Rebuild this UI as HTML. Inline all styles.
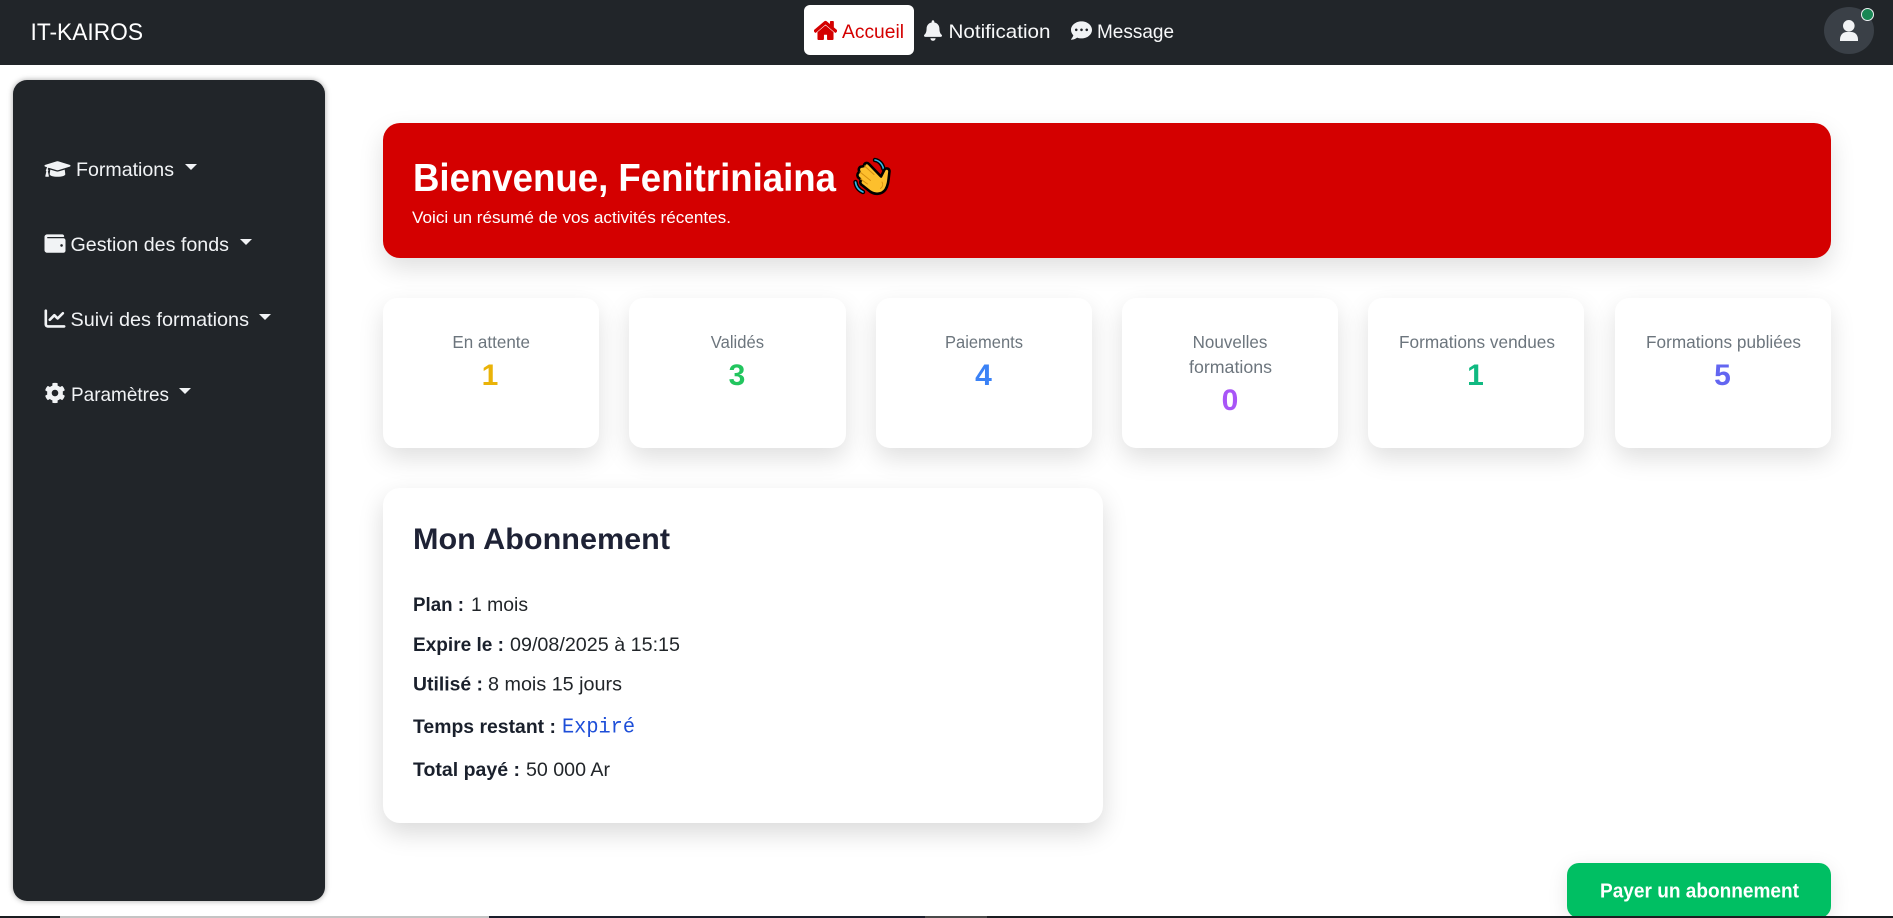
<!DOCTYPE html>
<html lang="fr">
<head>
<meta charset="utf-8">
<title>IT-KAIROS</title>
<style>
html,body{margin:0;padding:0;width:1893px;height:918px;overflow:hidden;background:#fff;font-family:"Liberation Sans",sans-serif}
.b{position:absolute;box-sizing:border-box}
#nav{left:0;top:0;width:1893px;height:65px;background:#212529}
#active{left:804px;top:5px;width:110px;height:50px;background:#fff;border-radius:6px}
#avatar{left:1824px;top:7px;width:50px;height:47px;border-radius:50%;background:#3a4047}
#dot{left:1861px;top:8px;width:13px;height:13px;border-radius:50%;background:#198754;border:1.5px solid #f1f3f5}
#side{left:12.5px;top:80px;width:312.5px;height:821px;background:#212529;border-radius:14px;box-shadow:0 0 6px rgba(0,0,0,.35)}
#banner{left:383px;top:123px;width:1448px;height:135px;background:#d40000;border-radius:17px;box-shadow:0 10px 25px rgba(0,0,0,.13)}
.card{top:298px;width:216.3px;height:150px;background:#fff;border-radius:14px;box-shadow:0 10px 25px rgba(0,0,0,.13)}
#sub{left:383px;top:488px;width:720px;height:335px;background:#fff;border-radius:17px;box-shadow:0 10px 25px rgba(0,0,0,.15)}
#pay{left:1567px;top:863px;width:264px;height:55px;background:#00bf63;border-radius:12px;box-shadow:0 5px 20px rgba(0,0,0,.1)}
#strip{left:0;top:916px;width:1893px;height:2px;background:#1b1d21}
#strip i{position:absolute;top:0;height:2px;display:block}
svg{position:absolute;left:0;top:0}
text{font-family:"Liberation Sans",sans-serif}
.n{font-size:19.5px;fill:#f8f9fa}
.s{font-size:19.5px;fill:#f1f3f5}
.l{font-size:17.5px;fill:#6c757d}
.v{font-size:30px;font-weight:700;text-anchor:middle}
.t{font-size:19.5px;fill:#212529}
.tb{font-size:19.5px;fill:#1a202c;font-weight:700}
</style>
</head>
<body>
<div class="b" id="nav"></div>
<div class="b" id="active"></div>
<div class="b" id="avatar"></div>
<div class="b" id="dot"></div>
<div class="b" id="side"></div>
<div class="b" id="banner"></div>
<div class="b card" style="left:383px"></div>
<div class="b card" style="left:629.3px"></div>
<div class="b card" style="left:875.6px"></div>
<div class="b card" style="left:1121.9px"></div>
<div class="b card" style="left:1368.2px"></div>
<div class="b card" style="left:1614.5px"></div>
<div class="b" id="sub"></div>
<div class="b" id="pay"></div>
<div class="b" id="strip"><i style="left:60px;width:429px;background:#c4c4c4"></i><i style="left:489px;width:436px;background:#1a1e2c"></i><i style="left:925px;width:62px;background:#4a4a4a"></i></div>

<svg width="1893" height="918" viewBox="0 0 1893 918" xmlns="http://www.w3.org/2000/svg">
<!-- navbar -->
<text x="30.5" y="40" font-size="24.5" fill="#fff" textLength="112.5" lengthAdjust="spacingAndGlyphs">IT-KAIROS</text>
<svg x="814" y="20" width="23" height="21" viewBox="0 0 576 512" preserveAspectRatio="none"><path fill="#d40000" stroke="#d40000" stroke-width="18" d="M280.37 148.26L96 300.11V464a16 16 0 0 0 16 16l112.06-.29a16 16 0 0 0 15.92-16V368a16 16 0 0 1 16-16h64a16 16 0 0 1 16 16v95.64a16 16 0 0 0 16 16.05L464 480a16 16 0 0 0 16-16V300L295.67 148.26a12.19 12.19 0 0 0-15.3 0zM571.6 251.47L488 182.56V44.05a12 12 0 0 0-12-12h-56a12 12 0 0 0-12 12v72.61L318.47 43a48 48 0 0 0-61 0L4.34 251.47a12 12 0 0 0-1.6 16.9l25.5 31A12 12 0 0 0 45.15 301l235.22-193.74a12.19 12.19 0 0 1 15.3 0L530.9 301a12 12 0 0 0 16.9-1.6l25.5-31a12 12 0 0 0-1.7-16.93z"/></svg>
<text x="842" y="38" font-size="19.5" fill="#d40000" textLength="62" lengthAdjust="spacingAndGlyphs">Accueil</text>
<svg x="924" y="20" width="18" height="21" viewBox="0 0 448 512"><path fill="#f1f3f5" d="M224 512c35.32 0 63.97-28.65 63.97-64H160.03c0 35.35 28.65 64 63.97 64zm215.39-149.71c-19.32-20.76-55.47-51.99-55.47-154.29 0-77.7-54.48-139.9-127.94-155.16V32c0-17.67-14.32-32-31.98-32s-31.98 14.33-31.98 32v20.84C118.56 68.1 64.08 130.3 64.08 208c0 102.3-36.15 133.53-55.47 154.29-6 6.45-8.66 14.16-8.61 21.71.11 16.4 12.98 32 32.1 32h383.8c19.12 0 32-15.6 32.1-32 .05-7.55-2.61-15.27-8.61-21.71z"/></svg>
<text class="n" x="948.5" y="38" textLength="102" lengthAdjust="spacingAndGlyphs">Notification</text>
<svg x="1070.5" y="20" width="22" height="21" viewBox="0 0 512 512"><path fill="#f1f3f5" d="M256 32C114.6 32 0 125.1 0 240c0 49.6 21.4 95 57 130.7C44.5 421.1 2.7 466 2.2 466.5c-2.2 2.3-2.8 5.7-1.5 8.7S4.8 480 8 480c66.3 0 116-31.8 140.6-51.4 32.7 12.3 69 19.4 107.4 19.4 141.4 0 256-93.1 256-208S397.4 32 256 32zM128 272c-17.7 0-32-14.3-32-32s14.3-32 32-32 32 14.3 32 32-14.3 32-32 32zm128 0c-17.7 0-32-14.3-32-32s14.3-32 32-32 32 14.3 32 32-14.3 32-32 32zm128 0c-17.7 0-32-14.3-32-32s14.3-32 32-32 32 14.3 32 32-14.3 32-32 32z"/></svg>
<text class="n" x="1097" y="38" textLength="77" lengthAdjust="spacingAndGlyphs">Message</text>
<circle cx="1848.8" cy="25.8" r="5.8" fill="#f1f3f5"/>
<path fill="#f1f3f5" d="M1840 41v-1.5c0-5 3.5-7.5 6.5-7.5h5c3 0 6.5 2.500 6.500 7.500V41z"/>

<!-- sidebar -->
<svg x="44.500" y="158.500" width="26" height="21" viewBox="0 0 640 512"><path fill="#f1f3f5" d="M622.34 153.2L343.4 67.5c-15.2-4.67-31.6-4.67-46.79 0L17.66 153.2c-23.54 7.23-23.54 38.36 0 45.59l48.63 14.94c-10.67 13.19-17.23 29.28-17.88 46.9C38.78 266.15 32 276.11 32 288c0 10.78 5.68 19.85 13.86 25.65L20.33 428.53C18.11 438.52 25.71 448 35.94 448h56.11c10.24 0 17.84-9.48 15.62-19.47L82.14 313.65C90.32 307.85 96 298.78 96 288c0-11.57-6.47-21.25-15.66-26.87.76-15.02 8.44-28.3 20.69-36.72L296.6 284.5c9.06 2.78 26.44 6.25 46.79 0l278.95-85.7c23.55-7.24 23.55-38.36 0-45.6zM352.79 315.09c-28.53 8.76-52.84 3.92-65.59 0l-145.02-44.55L128 384c0 35.35 85.96 64 192 64s192-28.65 192-64l-14.18-113.47-145.03 44.56z"/></svg>
<text class="s" x="76" y="176" textLength="98" lengthAdjust="spacingAndGlyphs">Formations</text>
<path fill="#f1f3f5" d="M185 164h12l-6 6z"/>
<svg x="44.500" y="232" width="21" height="23" viewBox="0 0 512 512"><path fill="#f1f3f5" d="M461.2 128H80c-8.84 0-16-7.16-16-16s7.16-16 16-16h384c8.84 0 16-7.16 16-16 0-26.51-21.49-48-48-48H64C28.65 32 0 60.65 0 96v320c0 35.35 28.65 64 64 64h397.2c28.02 0 50.8-21.53 50.8-48V176c0-26.47-22.78-48-50.8-48zM416 336c-17.67 0-32-14.33-32-32s14.33-32 32-32 32 14.33 32 32-14.33 32-32 32z"/></svg>
<text class="s" x="70.500" y="251" textLength="158.500" lengthAdjust="spacingAndGlyphs">Gestion des fonds</text>
<path fill="#f1f3f5" d="M240 239h12l-6 6z"/>
<svg x="44.500" y="307" width="21" height="23" viewBox="0 0 512 512"><path fill="#f1f3f5" d="M64 64c0-17.7-14.3-32-32-32S0 46.3 0 64V400c0 44.2 35.8 80 80 80H480c17.7 0 32-14.300 32-32s-14.300-32-32-32H80c-8.800 0-16-7.200-16-16V64zm406.600 86.600c12.500-12.500 12.500-32.800 0-45.300s-32.800-12.500-45.300 0L320 210.700l-57.400-57.400c-12.500-12.500-32.800-12.500-45.300 0l-112 112c-12.500 12.500-12.500 32.800 0 45.300s32.800 12.500 45.300 0L240 221.300l57.400 57.400c12.500 12.500 32.800 12.500 45.300 0l128-128z"/></svg>
<text class="s" x="70.500" y="326" textLength="178.500" lengthAdjust="spacingAndGlyphs">Suivi des formations</text>
<path fill="#f1f3f5" d="M259 314h12l-6 6z"/>
<svg x="44.500" y="382" width="21" height="22" viewBox="0 0 512 512"><path fill="#f1f3f5" d="M487.4 315.7l-42.6-24.6c4.3-23.2 4.3-47 0-70.2l42.6-24.6c4.9-2.8 7.1-8.6 5.5-14-11.1-35.6-30-67.8-54.7-94.6-3.8-4.1-10-5.1-14.8-2.3L380.8 110c-17.9-15.4-38.5-27.3-60.8-35.1V25.8c0-5.6-3.9-10.5-9.4-11.7-36.7-8.2-74.3-7.8-109.2 0-5.5 1.2-9.4 6.1-9.4 11.7V75c-22.2 7.9-42.8 19.8-60.8 35.1L88.7 85.5c-4.9-2.8-11-1.9-14.8 2.3-24.7 26.7-43.6 58.9-54.7 94.6-1.7 5.4.6 11.2 5.5 14L67.3 221c-4.3 23.2-4.3 47 0 70.2l-42.6 24.6c-4.9 2.8-7.1 8.6-5.5 14 11.1 35.6 30 67.8 54.7 94.6 3.8 4.1 10 5.1 14.8 2.3l42.6-24.6c17.9 15.4 38.5 27.3 60.8 35.1v49.2c0 5.6 3.9 10.5 9.4 11.7 36.7 8.2 74.3 7.8 109.2 0 5.5-1.2 9.4-6.1 9.4-11.7v-49.2c22.2-7.9 42.8-19.8 60.8-35.1l42.6 24.6c4.9 2.8 11 1.9 14.8-2.3 24.7-26.7 43.6-58.9 54.7-94.6 1.5-5.5-.7-11.3-5.6-14.1zM256 336c-44.1 0-80-35.9-80-80s35.9-80 80-80 80 35.9 80 80-35.9 80-80 80z"/></svg>
<text class="s" x="71" y="401" textLength="98" lengthAdjust="spacingAndGlyphs">Paramètres</text>
<path fill="#f1f3f5" d="M179 388h12l-6 6z"/>

<!-- banner -->
<text x="413" y="191" font-size="39" font-weight="700" fill="#fff" textLength="423" lengthAdjust="spacingAndGlyphs">Bienvenue, Fenitriniaina</text>
<text x="412" y="223" font-size="17" fill="#fff" textLength="319" lengthAdjust="spacingAndGlyphs">Voici un résumé de vos activités récentes.</text>
<!-- waving hand -->
<svg x="853" y="157" width="40" height="42" viewBox="0 0 40 42">
  <g fill="none" stroke-linecap="round" stroke-linejoin="round">
    <g stroke="#000" stroke-width="4.400"><path d="M22 3c4 .5 7.500 4 8.500 9"/><path d="M2.500 25c.5 4.500 3 8 7.500 10"/></g>
    <g stroke="#2fb7e8" stroke-width="1.600"><path d="M22 3c4 .5 7.500 4 8.500 9"/><path d="M2.500 25c.5 4.500 3 8 7.500 10"/></g>
    <path fill="#fdbf2d" stroke="#000" stroke-width="2.600" d="M16 7C14 5 11 6 11 9L9 9.500C6 9.500 5 12.500 6.500 15L5.500 15.500C3.500 17.500 4.500 20.500 6.500 21.500L8 23.500C6.500 25 7.500 27.500 9.500 28.500L17 34.500C22 38 29 37.500 32.500 32.500C35.500 28 35.500 22 36.500 14.500C36.500 11.500 33.500 10.500 31.500 12.500L28 19.500Z"/>
    <path stroke="#d68f10" stroke-width="1" d="M11.500 9l9.500 8.500M7 15l10.500 8.500M7.500 22l7 5M29 25c1.500 2.500.5 5-1.500 6.500"/>
  </g>
</svg>

<!-- stat cards -->
<text class="l" x="452.400" y="348" textLength="77.600" lengthAdjust="spacingAndGlyphs">En attente</text>
<text class="v" x="490" y="385" fill="#eab308">1</text>
<text class="l" x="710.800" y="348" textLength="53.200" lengthAdjust="spacingAndGlyphs">Validés</text>
<text class="v" x="737" y="385" fill="#22c55e">3</text>
<text class="l" x="945" y="348" textLength="78" lengthAdjust="spacingAndGlyphs">Paiements</text>
<text class="v" x="983.500" y="385" fill="#3b82f6">4</text>
<text class="l" x="1192.600" y="348" textLength="74.800" lengthAdjust="spacingAndGlyphs">Nouvelles</text>
<text class="l" x="1189" y="373" textLength="83" lengthAdjust="spacingAndGlyphs">formations</text>
<text class="v" x="1230" y="410" fill="#a855f7">0</text>
<text class="l" x="1399" y="348" textLength="156" lengthAdjust="spacingAndGlyphs">Formations vendues</text>
<text class="v" x="1475.500" y="385" fill="#10b981">1</text>
<text class="l" x="1646" y="348" textLength="155" lengthAdjust="spacingAndGlyphs">Formations publiées</text>
<text class="v" x="1722.500" y="385" fill="#6366f1">5</text>

<!-- subscription -->
<text x="413" y="549" font-size="29.500" font-weight="700" fill="#1e2235" textLength="257" lengthAdjust="spacingAndGlyphs">Mon Abonnement</text>
<text class="tb" x="413" y="611" textLength="51" lengthAdjust="spacingAndGlyphs">Plan :</text>
<text class="t" x="471" y="611" textLength="57" lengthAdjust="spacingAndGlyphs">1 mois</text>
<text class="tb" x="413" y="651" textLength="91" lengthAdjust="spacingAndGlyphs">Expire le :</text>
<text class="t" x="510" y="651" textLength="170" lengthAdjust="spacingAndGlyphs">09/08/2025 à 15:15</text>
<text class="tb" x="413" y="690.500" textLength="70" lengthAdjust="spacingAndGlyphs">Utilisé :</text>
<text class="t" x="488" y="690.500" textLength="134" lengthAdjust="spacingAndGlyphs">8 mois 15 jours</text>
<text class="tb" x="413" y="733" textLength="143" lengthAdjust="spacingAndGlyphs">Temps restant :</text>
<text x="562" y="732.500" font-size="21" fill="#1d4ed8" style="font-family:'Liberation Mono',monospace" textLength="73" lengthAdjust="spacingAndGlyphs">Expiré</text>
<text class="tb" x="413" y="776" textLength="107" lengthAdjust="spacingAndGlyphs">Total payé :</text>
<text class="t" x="526" y="776" textLength="84" lengthAdjust="spacingAndGlyphs">50 000 Ar</text>

<!-- button -->
<text x="1600" y="897.500" font-size="20" font-weight="700" fill="#fff" textLength="199" lengthAdjust="spacingAndGlyphs">Payer un abonnement</text>
</svg>
</body>
</html>
